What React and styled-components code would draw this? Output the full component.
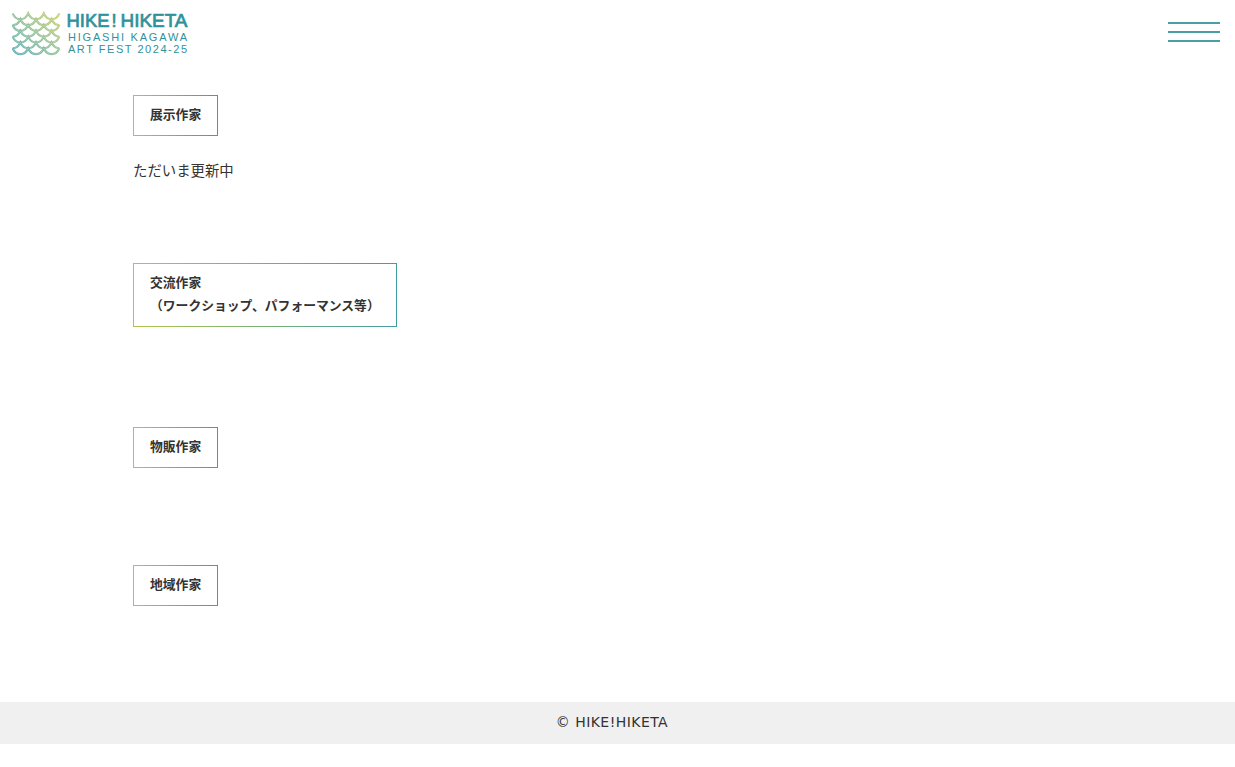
import styled, { createGlobalStyle } from "styled-components";

const artists = [
    { title: ["展示作家"], text: "ただいま更新中", height: 168 },
    { title: ["交流作家", "（ワークショップ、パフォーマンス等）"], height: 164 },
    { title: ["物販作家"], height: 138 },
    { title: ["地域作家"], height: 137 },
];

const waveRows = [0, 1, 2, 3, 4, 5, 6];

// Odd rows are shifted by half a scale and end in half scales
function wavePath(row) {
    const y = 1.4 + row * 5.8;
    const scale = "c1.6 3.6 4.4 5.9 7.8 5.9 s6.2 -2.3 7.8 -5.9";
    if (row % 2 === 0) {
        return `M0.6 ${y} ${scale} ${scale} ${scale}`;
    }
    return `M0.6 ${y + 5.9} c3.4 0 6.2 -2.3 7.8 -5.9 ${scale} ${scale} c1.6 3.6 4.4 5.9 7.8 5.9`;
}

const Logo = function () {
    return (
        <LogoSvg viewBox="0 -8 180 54" role="img" aria-label="HIKE! HIKETA">
            <defs>
                <linearGradient id="wave" gradientUnits="userSpaceOnUse" x1="6" y1="43" x2="42" y2="2">
                    <stop offset="0" stopColor="#5eabb0" />
                    <stop offset="0.5" stopColor="#8cbf94" />
                    <stop offset="1" stopColor="#c3cd6c" />
                </linearGradient>
            </defs>
            <g fill="none">
                {waveRows.map((row) => (
                    <g key={row}>
                        <path d={wavePath(row)} stroke="url(#wave)" strokeWidth="2.1" />
                        <path d={wavePath(row)} stroke="#fff" strokeOpacity="0.6" strokeWidth="0.5" />
                    </g>
                ))}
            </g>
            <g fill="#2f929b" fontFamily="'Liberation Sans', Arial, sans-serif">
                <g fontSize="18.3" stroke="#2f929b" strokeWidth="0.7">
                    <text x="54.5" y="14.7" textLength="43" lengthAdjust="spacingAndGlyphs">HIKE</text>
                    <text x="99.5" y="14.7">!</text>
                    <text x="108.5" y="14.7" textLength="67" lengthAdjust="spacingAndGlyphs">HIKETA</text>
                </g>
                <text x="56" y="28.8" fontSize="11" textLength="119">HIGASHI KAGAWA</text>
                <text x="56" y="40.8" fontSize="11" textLength="119">ART FEST 2024-25</text>
            </g>
        </LogoSvg>
    );
};

export default function App() {
    return (
        <>
            <GlobalStyle />
            <Header>
                <Logo />
                <MenuButton aria-label="menu">
                    <span />
                    <span />
                    <span />
                </MenuButton>
            </Header>
            <Main>
                {artists.map((item) => (
                    <Section key={item.title[0]} $height={item.height}>
                        <Title>
                            {item.title.map((line) => <span key={line}>{line}</span>)}
                        </Title>
                        {item.text && <Text>{item.text}</Text>}
                    </Section>
                ))}
            </Main>
            <Footer>© HIKE!HIKETA</Footer>
        </>
    );
}

// Design
const GlobalStyle = createGlobalStyle`
  * {
    box-sizing: border-box;
  }

  body {
    margin: 0;
    background: #fff;
    color: #333;
    font-family: "Noto Sans CJK JP", sans-serif;
  }
`;

const Header = styled.header`
  display: flex;
  justify-content: space-between;
  align-items: flex-start;
  height: 95px;
  padding: 4px 15px 0 12px;
`;

const LogoSvg = styled.svg`
  width: 180px;
  height: 54px;
`;

const MenuButton = styled.button`
  display: flex;
  flex-direction: column;
  gap: 7px;
  width: 52px;
  margin-top: 18px;
  padding: 0;
  border: 0;
  background: none;

  & > span {
    width: 100%;
    height: 2px;
    background: #4a9fa5;
  }
`;

const Main = styled.main`
  padding: 0 133px;
`;

const Section = styled.section`
  display: flex;
  flex-direction: column;
  align-items: flex-start;
  height: ${({ $height }) => $height}px;
`;

const Title = styled.h2`
  display: flex;
  flex-direction: column;
  margin: 0;
  padding: 6px 16.2px 10px 16px;
  border: 1px solid transparent;
  background:
    linear-gradient(#fff, #fff) padding-box,
    linear-gradient(to right, #b0c34c, #429da3) border-box;
  font-size: 12.8px;
  font-weight: bold;
  line-height: 23px;
`;

const Text = styled.p`
  margin: 21px 0 0;
  font-size: 14.4px;
  line-height: 26px;
`;

const Footer = styled.footer`
  height: 42px;
  padding-right: 11px;
  background: #f0f0f0;
  font-family: "DejaVu Sans", Verdana, sans-serif;
  font-size: 14px;
  letter-spacing: 0.45px;
  line-height: 40px;
  text-align: center;
`;
